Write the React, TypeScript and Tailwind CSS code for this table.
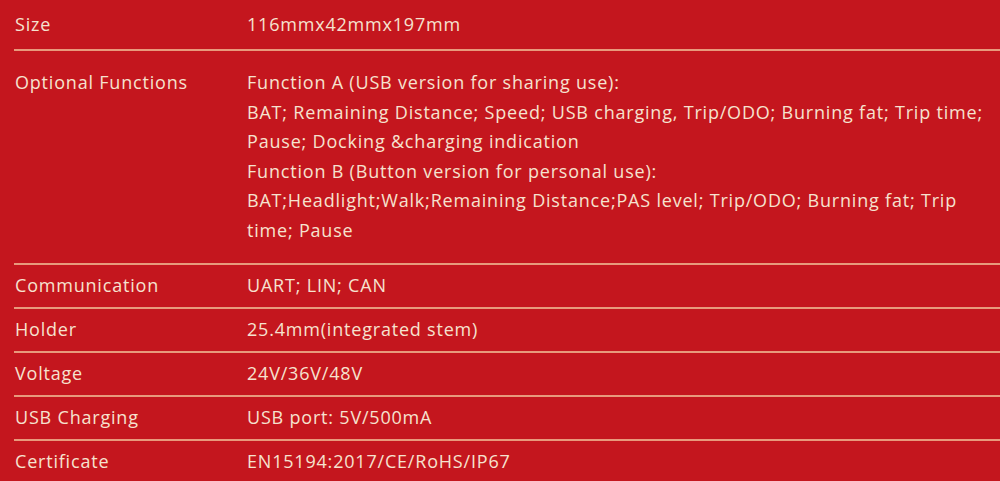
const rows: { label: string; value: string[] }[] = [
  { label: 'Communication', value: ['UART; LIN; CAN'] },
  { label: 'Holder', value: ['25.4mm(integrated stem)'] },
  { label: 'Voltage', value: ['24V/36V/48V'] },
  { label: 'USB Charging', value: ['USB port: 5V/500mA'] },
  { label: 'Certificate', value: ['EN15194:2017/CE/RoHS/IP67'] },
];

const functions = [
  'Function A (USB version for sharing use):',
  'BAT; Remaining Distance; Speed; USB charging, Trip/ODO; Burning fat; Trip time;',
  'Pause; Docking &charging indication',
  'Function B (Button version for personal use):',
  'BAT;Headlight;Walk;Remaining Distance;PAS level; Trip/ODO; Burning fat; Trip',
  'time; Pause',
];

function Row({ label, children, className }: { label: string; children: React.ReactNode; className: string }) {
  return (
    <div className={`flex ${className}`}>
      <div className="w-[247px] shrink-0 pl-[15px]">{label}</div>
      <div className="flex-1 whitespace-nowrap">{children}</div>
    </div>
  );
}

export default function App() {
  return (
    <div
      className="w-[1000px] h-[481px] overflow-hidden bg-[#c4161e] text-[#f6e2cf] text-[18px] tracking-[0.8px] leading-[29.6px]"
      style={{ fontFamily: '"Open Sans", "DejaVu Sans", sans-serif' }}
    >
      <Row label="Size" className="h-[49px] items-center">
        116mmx42mmx197mm
      </Row>
      <div className="ml-[14px] h-[2px] bg-[#e89a7c]" />
      <Row label="Optional Functions" className="h-[212px] pt-[17px]">
        {functions.map((l) => (
          <div key={l}>{l}</div>
        ))}
      </Row>
      {rows.map((r) => (
        <div key={r.label}>
          <div className="ml-[14px] h-[2px] bg-[#e89a7c]" />
          <Row label={r.label} className="h-[42px] items-center">
            {r.value}
          </Row>
        </div>
      ))}
    </div>
  );
}
